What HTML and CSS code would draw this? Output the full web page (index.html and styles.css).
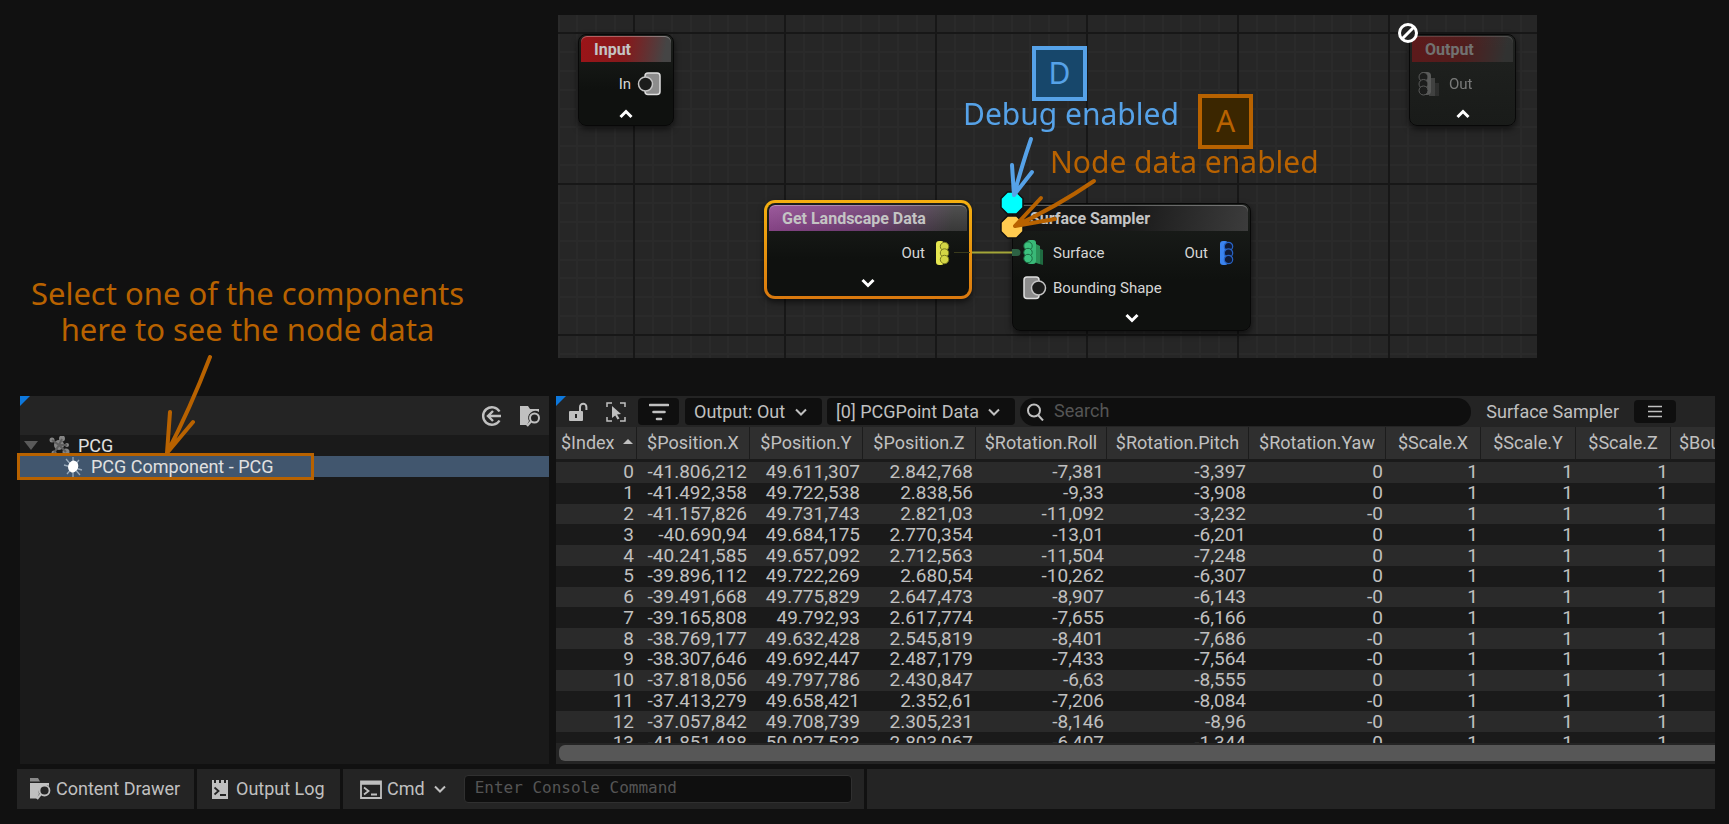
FILE: index.html
```html
<!DOCTYPE html>
<html lang="en">
<head>
<meta charset="utf-8">
<title>PCG node data</title>
<link rel="stylesheet" href="styles.css">
</head>
<body>
<svg class="defs" aria-hidden="true">
  <defs>
    <symbol id="chev" viewBox="0 0 14 10"><path d="M2 2.500l5 5 5-5" fill="none" stroke="currentColor" stroke-width="2"/></symbol>
    <symbol id="fat" viewBox="0 0 14 10"><path d="M1.500 2l5.500 5.500 5.500-5.500" fill="none" stroke="currentColor" stroke-width="3"/></symbol>
    <symbol id="shape" viewBox="0 0 24 24"><rect x="1" y="1" width="15" height="21.500" rx="3" fill="#8c8c8c" stroke="#dedede" stroke-width="1.500"/><circle cx="15.500" cy="12" r="7" fill="#1b1c1b" stroke="#c4c4c4" stroke-width="1.500"/></symbol>
    <symbol id="finder" viewBox="0 0 22 22"><path d="M1 1h8l2 3h9v3a7 7 0 0 0-10 9l-2 4H1z" fill="currentColor"/><circle cx="15.500" cy="13" r="4.500" fill="none" stroke="currentColor" stroke-width="2"/><path d="M12 16.500l-4 4.500" stroke="currentColor" stroke-width="2.200"/></symbol>
    <symbol id="drawer" viewBox="0 0 22 22"><path d="M1 0h8l2 3.500H1z" fill="#8a8a8a"/><path d="M1 5h19v3a7 7 0 0 0-10 8l-2 4.500H1z" fill="currentColor"/><circle cx="15.500" cy="12.500" r="5" fill="none" stroke="currentColor" stroke-width="1.800"/><path d="M12 16l-4 5" stroke="currentColor" stroke-width="2.200"/></symbol>
  </defs>
</svg>

<section class="top">
  <div class="note">
    <p class="hand orange">Select one of the components<br>here to see the node data</p>
    <svg class="note-arrow" width="50" height="102" viewBox="0 0 50 102"><path d="M48 2Q28 54 5 98M8 57L5 98L31 67" class="stroke-orange"/></svg>
  </div>
  <main class="graph">
    <svg class="grid" width="100%" height="100%">
      <defs>
        <pattern id="cells" width="151" height="151" patternUnits="userSpaceOnUse" x="76" y="18">
          <path d="M19 0v151M38 0v151M57 0v151M76 0v151M94 0v151M113 0v151M132 0v151M0 19h151M0 38h151M0 57h151M0 76h151M0 94h151M0 113h151M0 132h151" stroke="#2a2a2a" stroke-width="2"/>
          <path d="M0 0v151M151 0v151M0 0h151M0 151h151" stroke="#171717" stroke-width="2"/>
        </pattern>
      </defs>
      <rect width="100%" height="100%" fill="url(#cells)"/>
    </svg>

    <article class="node input">
      <h2 class="red">Input</h2>
      <div class="pins end">In <svg class="pin" width="24" height="24"><g transform="matrix(-1 0 0 1 24 0)"><use href="#shape"/></g></svg></div>
      <svg class="expand up" width="14" height="10"><use href="#fat"/></svg>
    </article>

    <article class="node output">
      <div class="faded">
        <h2 class="red">Output</h2>
        <div class="pins"><svg class="pin" width="24" height="24" viewBox="0 0 24 24"><path d="M12 6h6v18h-6z" fill="#666"/><path d="M18 11h4v13h-4z" fill="#404040"/><rect x="3" y="0" width="11" height="23" rx="4" fill="#999"/><g fill="#1c1c1c" stroke="#999"><circle cx="6.500" cy="5" r="4.500"/><circle cx="6.500" cy="12" r="4.500"/><circle cx="6.500" cy="18.500" r="4.500"/></g></svg> Out</div>
      </div>
      <svg class="expand up" width="14" height="10"><use href="#fat"/></svg>
    </article>
    <svg class="forbid" width="22" height="22" viewBox="0 0 22 22"><circle cx="11" cy="11" r="8.500" fill="#222" stroke="#fff" stroke-width="3"/><path d="M16.500 5.500l-11 11" stroke="#fff" stroke-width="3"/></svg>

    <article class="node landscape">
      <h2 class="purple">Get Landscape Data</h2>
      <div class="pins end">Out <svg class="pin" width="14" height="24" viewBox="0 0 14 24"><rect width="8" height="24" rx="3" fill="#e6e650"/><g fill="#d3d545" stroke="#77781f"><circle cx="8.500" cy="5.500" r="4.200"/><circle cx="8.500" cy="12" r="4.200"/><circle cx="8.500" cy="18.500" r="4.200"/></g></svg></div>
      <svg class="expand" width="14" height="10"><use href="#fat"/></svg>
    </article>

    <article class="node sampler">
      <h2 class="black">Surface Sampler</h2>
      <div class="pins">
        <svg class="pin" width="24" height="25" viewBox="0 0 24 25"><path d="M13 7l7 3v15l-7-2z" fill="#1f6b41"/><path d="M11 3l6 3v18l-6-2z" fill="#2b8f57"/><rect x="4" y="0" width="9" height="24" rx="3" fill="#39b877"/><g fill="#3cc27e" stroke="#1c6a42"><circle cx="5" cy="6" r="4.200"/><circle cx="5" cy="12.500" r="4.200"/><circle cx="5" cy="18.500" r="4.200"/></g></svg>
        Surface <span class="push">Out</span>
        <svg class="pin blue" width="14" height="24" viewBox="0 0 14 24"><rect width="8" height="24" rx="3" fill="#3b84f0"/><g fill="#101a35" stroke="#2763c4" stroke-width="1.200"><circle cx="8.500" cy="5.500" r="4.200"/><circle cx="8.500" cy="12" r="4.200"/><circle cx="8.500" cy="18.500" r="4.200"/></g></svg>
      </div>
      <div class="pins"><svg class="pin" width="24" height="24"><use href="#shape"/></svg> Bounding Shape</div>
      <svg class="expand" width="14" height="10"><use href="#fat"/></svg>
    </article>

    <svg class="marks" width="979" height="343" viewBox="558 15 979 343">
      <path d="M954 252.500h16" stroke="#3a3b1c" stroke-width="1"/><path d="M972 252.500h42" stroke="#a3a638" stroke-width="2"/>
      <path d="M1012 249h5a3 3 0 0 1 0 7h-5z" fill="#2d6244"/>
      <g stroke="#111" stroke-width="1.500">
        <path d="M1007.500 192h9l6.500 6.500v9l-6.500 6.500h-9l-6.500-6.500v-9z" fill="#00ffff"/>
        <path d="M1007.500 216h9l6.500 6.500v9l-6.500 6.500h-9l-6.500-6.500v-9z" fill="#ffcb50"/>
      </g>
      <path d="M1031 139Q1022 165 1014 195M1012 165L1014 195L1032 172" class="stroke-blue"/>
      <path d="M1094 181Q1056 207 1015 226M1041 198L1015 226L1055 219" class="stroke-orange"/>
    </svg>
    <kbd class="key hand d">D</kbd>
    <kbd class="key hand a">A</kbd>
    <span class="hand tag debug">Debug enabled</span>
    <span class="hand tag nodedata">Node data enabled</span>
  </main>
</section>

<section class="work">
  <aside class="tree">
    <div class="bar tree-bar">
      <button class="icon" aria-label="Back"><svg width="21" height="22" viewBox="0 0 21 22"><path d="M18.500 6.500a8.800 8.800 0 1 0 0 9M20 11H7M12 6l-5 5 5 5" fill="none" stroke="currentColor" stroke-width="2.400"/></svg></button>
      <button class="icon" aria-label="Find in content"><svg width="22" height="22"><use href="#finder"/></svg></button>
    </div>
    <ul>
      <li class="root"><svg class="fold" width="14" height="9" viewBox="0 0 14 9"><path d="M0 0h14L7 9z" fill="#5a5a5a"/></svg><svg width="22" height="20" viewBox="0 0 22 20"><g fill="#858585"><circle cx="10" cy="9" r="5"/><circle cx="3" cy="4" r="2.500"/><circle cx="13" cy="2.500" r="3"/><circle cx="18" cy="9" r="2"/><circle cx="17" cy="16" r="3.500"/><circle cx="5" cy="17" r="2.500"/></g><path d="M3 4l7 5 3-6M10 9l7 7M10 9l-5 8M10 9h8" stroke="#5e5e5e" stroke-width="2" fill="none"/></svg>PCG</li>
      <li class="leaf"><svg width="20" height="20" viewBox="0 0 20 20"><path d="M3 2l14 16M10 0v20M1 8l18 5M16 3L4 17" stroke="#9ab" stroke-width="1.300"/><ellipse cx="10" cy="9.500" rx="5" ry="6" fill="#fff" transform="rotate(20 10 10)"/></svg>PCG Component - PCG</li>
    </ul>
  </aside>

  <div class="data">
    <div class="bar data-bar">
      <button class="icon lock" aria-label="Unlock"><svg width="20" height="20" viewBox="0 0 20 20"><rect x="1" y="9" width="14" height="10" rx="1" fill="currentColor"/><path d="M12 9V5a3.200 3.200 0 0 1 6.400 0v3" fill="none" stroke="currentColor" stroke-width="2"/><path d="M8 12v4" stroke="#242424" stroke-width="2"/></svg></button>
      <button class="icon pick" aria-label="Select node"><svg width="20" height="20" viewBox="0 0 20 20"><path d="M1 5V1h5M14 1h5v4M19 15v4h-5M6 19H1v-4" fill="none" stroke="currentColor" stroke-width="1.500"/><path d="M6 4l9 8-4 .5 2.500 4-2 1-2.300-4L6 16z" fill="currentColor"/></svg></button>
      <button class="box filter" aria-label="Filter"><svg width="20" height="18" viewBox="0 0 20 18"><path d="M1 2h18M4.500 9h11M8 16h4" stroke="currentColor" stroke-width="2.600" stroke-linecap="round"/></svg></button>
      <span class="pick-list out"><select class="box" aria-label="Output pin"><option>Output: Out</option></select><svg width="14" height="10"><use href="#chev"/></svg></span>
      <span class="pick-list point"><select class="box" aria-label="Data"><option>[0] PCGPoint Data</option></select><svg width="14" height="10"><use href="#chev"/></svg></span>
      <label class="search"><svg width="18" height="18" viewBox="0 0 18 18"><circle cx="8" cy="7.500" r="6" fill="none" stroke="currentColor" stroke-width="2"/><path d="M12 12l5 5.500" stroke="currentColor" stroke-width="2"/></svg><input type="search" placeholder="Search" aria-label="Search"></label>
      <span class="name">Surface Sampler</span>
      <button class="box menu" aria-label="Menu"><svg width="14" height="13" viewBox="0 0 14 13"><path d="M0 1.500h14M0 6.500h14M0 11.500h14" stroke="currentColor" stroke-width="1.500"/></svg></button>
    </div>
    <div class="scroll">
      <table>
        <colgroup><col class="w-i"><col class="w-p"><col class="w-p"><col class="w-p"><col class="w-r"><col class="w-t"><col class="w-y"><col class="w-s"><col class="w-s"><col class="w-s"><col class="w-b"></colgroup>
        <thead><tr><th class="sorted">$Index <svg width="10" height="7" viewBox="0 0 10 7"><path d="M0 6l5-5 5 5z" fill="currentColor"/></svg></th><th>$Position.X</th><th>$Position.Y</th><th>$Position.Z</th><th>$Rotation.Roll</th><th>$Rotation.Pitch</th><th>$Rotation.Yaw</th><th>$Scale.X</th><th>$Scale.Y</th><th>$Scale.Z</th><th class="last">$BoundsMin.X</th></tr></thead>
        <tbody>
          <tr><td>0</td><td>-41.806,212</td><td>49.611,307</td><td>2.842,768</td><td>-7,381</td><td>-3,397</td><td>0</td><td>1</td><td>1</td><td>1</td><td></td></tr>
          <tr><td>1</td><td>-41.492,358</td><td>49.722,538</td><td>2.838,56</td><td>-9,33</td><td>-3,908</td><td>0</td><td>1</td><td>1</td><td>1</td><td></td></tr>
          <tr><td>2</td><td>-41.157,826</td><td>49.731,743</td><td>2.821,03</td><td>-11,092</td><td>-3,232</td><td>-0</td><td>1</td><td>1</td><td>1</td><td></td></tr>
          <tr><td>3</td><td>-40.690,94</td><td>49.684,175</td><td>2.770,354</td><td>-13,01</td><td>-6,201</td><td>0</td><td>1</td><td>1</td><td>1</td><td></td></tr>
          <tr><td>4</td><td>-40.241,585</td><td>49.657,092</td><td>2.712,563</td><td>-11,504</td><td>-7,248</td><td>0</td><td>1</td><td>1</td><td>1</td><td></td></tr>
          <tr><td>5</td><td>-39.896,112</td><td>49.722,269</td><td>2.680,54</td><td>-10,262</td><td>-6,307</td><td>0</td><td>1</td><td>1</td><td>1</td><td></td></tr>
          <tr><td>6</td><td>-39.491,668</td><td>49.775,829</td><td>2.647,473</td><td>-8,907</td><td>-6,143</td><td>-0</td><td>1</td><td>1</td><td>1</td><td></td></tr>
          <tr><td>7</td><td>-39.165,808</td><td>49.792,93</td><td>2.617,774</td><td>-7,655</td><td>-6,166</td><td>0</td><td>1</td><td>1</td><td>1</td><td></td></tr>
          <tr><td>8</td><td>-38.769,177</td><td>49.632,428</td><td>2.545,819</td><td>-8,401</td><td>-7,686</td><td>-0</td><td>1</td><td>1</td><td>1</td><td></td></tr>
          <tr><td>9</td><td>-38.307,646</td><td>49.692,447</td><td>2.487,179</td><td>-7,433</td><td>-7,564</td><td>-0</td><td>1</td><td>1</td><td>1</td><td></td></tr>
          <tr><td>10</td><td>-37.818,056</td><td>49.797,786</td><td>2.430,847</td><td>-6,63</td><td>-8,555</td><td>0</td><td>1</td><td>1</td><td>1</td><td></td></tr>
          <tr><td>11</td><td>-37.413,279</td><td>49.658,421</td><td>2.352,61</td><td>-7,206</td><td>-8,084</td><td>-0</td><td>1</td><td>1</td><td>1</td><td></td></tr>
          <tr><td>12</td><td>-37.057,842</td><td>49.708,739</td><td>2.305,231</td><td>-8,146</td><td>-8,96</td><td>-0</td><td>1</td><td>1</td><td>1</td><td></td></tr>
          <tr><td>13</td><td>-41.851,488</td><td>50.027,523</td><td>2.803,067</td><td>-6,407</td><td>-1,344</td><td>0</td><td>1</td><td>1</td><td>1</td><td></td></tr>
        </tbody>
      </table>
    </div>
    <div class="track"><div class="thumb"></div></div>
  </div>
</section>

<footer class="status">
  <button class="cell drawer"><svg width="22" height="22"><use href="#drawer"/></svg>Content Drawer</button>
  <button class="cell log"><svg width="18" height="22" viewBox="0 0 18 22"><path d="M1 2h2v3h2V2h3v3h2V2h3v3h2V2h2v19H1z" fill="currentColor"/><path d="M3.500 9.500l4 3.500-4 3.500M9 17h6" fill="none" stroke="#242424" stroke-width="1.800"/></svg>Output Log</button>
  <div class="cell console">
    <button class="cmd"><svg width="22" height="19" viewBox="0 0 22 19"><path d="M1 1.500h20v16.500H1z" fill="none" stroke="currentColor" stroke-width="1.800"/><path d="M1 3h20" stroke="currentColor" stroke-width="3.500"/><path d="M4 7.500l4.500 3.500L4 14.500M11 14.500h6" fill="none" stroke="currentColor" stroke-width="1.800"/></svg>Cmd<svg class="cmd-chev" width="14" height="10"><use href="#chev"/></svg></button>
    <input type="text" placeholder="Enter Console Command" aria-label="Console command">
  </div>
  <div class="cell rest"></div>
</footer>
</body>
</html>
```
FILE: styles.css
```css
*, *::before, *::after { box-sizing: border-box; }
body {
  margin: 0;
  min-height: 100vh;
  padding: 15px 14px 15px 17px;
  overflow: hidden;
  background: #111;
  color: #c0c0c0;
  font: 18px/20px Roboto, sans-serif;
}
button, input, select { font: inherit; color: inherit; border: 0; padding: 0; margin: 0; background: none; }
svg { display: block; flex: none; }
.defs { position: absolute; width: 0; height: 0; }

.top { display: grid; grid-template-columns: 541px minmax(0, 1fr) 178px; }
.note { position: relative; z-index: 1; padding-top: 260px; }
.note p { margin: 0; width: 461px; text-align: center; }
.note-arrow { position: absolute; left: 145px; top: 340px; }
.hand { font: 30px/36px "Noto Sans", sans-serif; white-space: nowrap; }
.note .hand { font-size: 31px; }
.orange { color: #b86200; }
.stroke-orange, .stroke-blue { fill: none; stroke: #b86200; stroke-width: 4; stroke-linecap: round; stroke-linejoin: round; }
.stroke-blue { stroke: #56a2e8; }

.graph { position: relative; height: 343px; overflow: hidden; background: #262626; }
.grid { position: absolute; inset: 0; }
.marks { position: absolute; left: 0; top: 0; }

.node {
  position: absolute;
  padding: 1px 2px;
  border: 1px solid #080808;
  border-radius: 8px;
  background: linear-gradient(#1c1f1c, #0f110f 60%);
  box-shadow: 0 3px 6px #0009;
  color: #d6d6d6;
  font-size: 15px;
}
.node h2 {
  margin: 0;
  padding: 0 13px;
  height: 26px;
  border-radius: 6px 6px 0 0;
  box-shadow: inset 0 1px #ffffff50;
  color: #c4c4c4;
  font-size: 16px;
  line-height: 28px;
}
.red { background: linear-gradient(100deg, #9c1418, #841a1c 50%, #454545 92%); }
.purple { background: linear-gradient(#ffffff18, #00000018), linear-gradient(100deg, #924a92, #744078 50%, #3e3e3e 92%); }
.black { background: linear-gradient(100deg, #141414, #1a1a1a 50%, #3c3c3c); }
.pins { display: flex; align-items: center; gap: 6px; height: 35px; margin-top: 4px; padding: 0 10px 0 8px; }
.pins + .pins { margin-top: 0; }
.end { justify-content: flex-end; }
.push { margin-left: auto; }
.expand { margin: 8px auto 0; color: #fff; }
.up { transform: scaleY(-1); }
.input { left: 20px; top: 19px; width: 96px; height: 92px; }
.output { left: 851px; top: 19px; width: 107px; height: 92px; }
.output .pins { gap: 8px; padding-left: 5px; }
.output { background: linear-gradient(#202220, #191b19); }
.faded { opacity: .5; }
.forbid { position: absolute; left: 839px; top: 7px; }
.landscape {
  left: 206px;
  top: 185px;
  width: 208px;
  height: 99px;
  border: 3px solid transparent;
  border-radius: 11px;
  background: linear-gradient(#1c1f1c, #0f110f 60%) padding-box, linear-gradient(#f5b010, #d9780e) border-box;
}
.landscape h2 { margin-top: 1px; }
.landscape .pins { gap: 11px; padding-right: 17px; }
.sampler { left: 454px; top: 188px; width: 239px; height: 128px; }
.sampler h2 { padding-left: 15px; }
.sampler .pins { padding-right: 14px; }
.blue { margin-left: 6px; }

.key {
  position: absolute;
  display: grid;
  place-items: center;
  width: 55px;
  height: 55px;
  padding-bottom: 2px;
  border: 4px solid;
}
.d { left: 474px; top: 31px; color: #56a2e8; background: #17476b; }
.a { left: 640px; top: 79px; color: #b86200; background: #3b2600; }
.tag { position: absolute; }
.debug { left: 405px; top: 81px; color: #56a2e8; }
.nodedata { left: 492px; top: 129px; color: #b86200; }

.work { display: flex; gap: 7px; margin-top: 38px; padding-left: 3px; }
.bar { position: relative; display: flex; align-items: center; background: #242424; }
.bar::before {
  content: "";
  position: absolute;
  left: 0;
  top: 0;
  border-top: 10px solid #0d78dd;
  border-right: 10px solid transparent;
}
.icon { color: #c0c0c0; }
.tree { flex: none; width: 529px; background: #1a1a1a; }
.tree-bar { height: 39px; justify-content: flex-end; gap: 17px; padding-right: 8px; }
.tree ul { margin: 0; padding: 0; list-style: none; color: #e0e0e0; }
.tree li { display: flex; align-items: center; height: 21px; }
.root { gap: 7px; padding-left: 4px; }
.root .fold { margin-right: 4px; }
.leaf { position: relative; gap: 8px; padding-left: 43px; background: #41566e; }
.leaf::after {
  content: "";
  position: absolute;
  inset: -3px auto -3px -3px;
  width: 297px;
  border: 3px solid #b86200;
}

.data { flex: 1; min-width: 0; background: #1a1a1a; }
.data-bar { height: 31px; padding: 0 39px 0 12px; }
.box { height: 27px; border-radius: 4px; background: #0f0f0f; }
.pick { margin: 0 12px 0 18px; }
.filter { display: grid; place-items: center; width: 41px; }
.pick-list { position: relative; margin-left: 6px; }
.pick-list select { appearance: none; display: block; width: 100%; padding: 0 9px; }
.pick-list svg { position: absolute; right: 14px; top: 9px; pointer-events: none; }
.out { width: 137px; }
.point { width: 188px; margin-left: 5px; }
.search { flex: 1; display: flex; align-items: center; gap: 10px; height: 28px; margin: 0 15px 0 5px; padding: 0 8px 0 6px; border-radius: 14px; background: #0f0f0f; }
.search input { flex: 1; min-width: 0; padding-bottom: 2px; outline: 0; }
::placeholder { color: #555; opacity: 1; }
.menu { display: grid; place-items: center; width: 42px; height: 23px; margin-left: 15px; }

.scroll { height: 316px; overflow: hidden; }
table { table-layout: fixed; width: 1235px; height: 326px; border-collapse: separate; border-spacing: 0; }
.w-i { width: 81px; }
.w-p { width: 113px; }
.w-r { width: 131px; }
.w-t { width: 142px; }
.w-y { width: 137px; }
.w-s { width: 95px; }
.w-b { width: 120px; }
th { height: 35px; padding: 0 6px; background: #2f2f2f; border-right: 1px solid #1c1c1c; border-bottom: 3px solid #1a1a1a; font-weight: 400; text-align: center; }
.sorted { padding: 0 3px; text-align: right; white-space: nowrap; }
.sorted svg { display: inline-block; margin: 0 0 4px 4px; }
.last { padding: 0 8px; text-align: left; }
td { height: 20px; padding: 0 3px; font-size: 19px; line-height: 20px; text-align: right; }
tbody tr:nth-child(odd) { background: #2a2a2a; }
.track { padding: 2px 0 3px 3px; background: #242424; }
.thumb { height: 16px; border-radius: 6px 0 0 6px; background: #575757; }

.status { display: flex; gap: 3px; margin-top: 5px; }
.cell { display: flex; align-items: center; height: 40px; background: #242424; }
.drawer { gap: 5px; width: 177px; padding-left: 12px; }
.log { gap: 7px; width: 143px; padding-left: 14px; }
.console { gap: 17px; width: 521px; padding: 0 12px 0 17px; }
.cmd { display: flex; align-items: center; gap: 5px; }
.cmd-chev { margin-left: 3px; }
.console input { flex: 1; min-width: 0; height: 28px; padding: 0 10px 3px; border: 1px solid #303030; border-radius: 4px; background: #0f0f0f; font: 16px "DejaVu Sans Mono", monospace; }
.rest { flex: 1; }
```
